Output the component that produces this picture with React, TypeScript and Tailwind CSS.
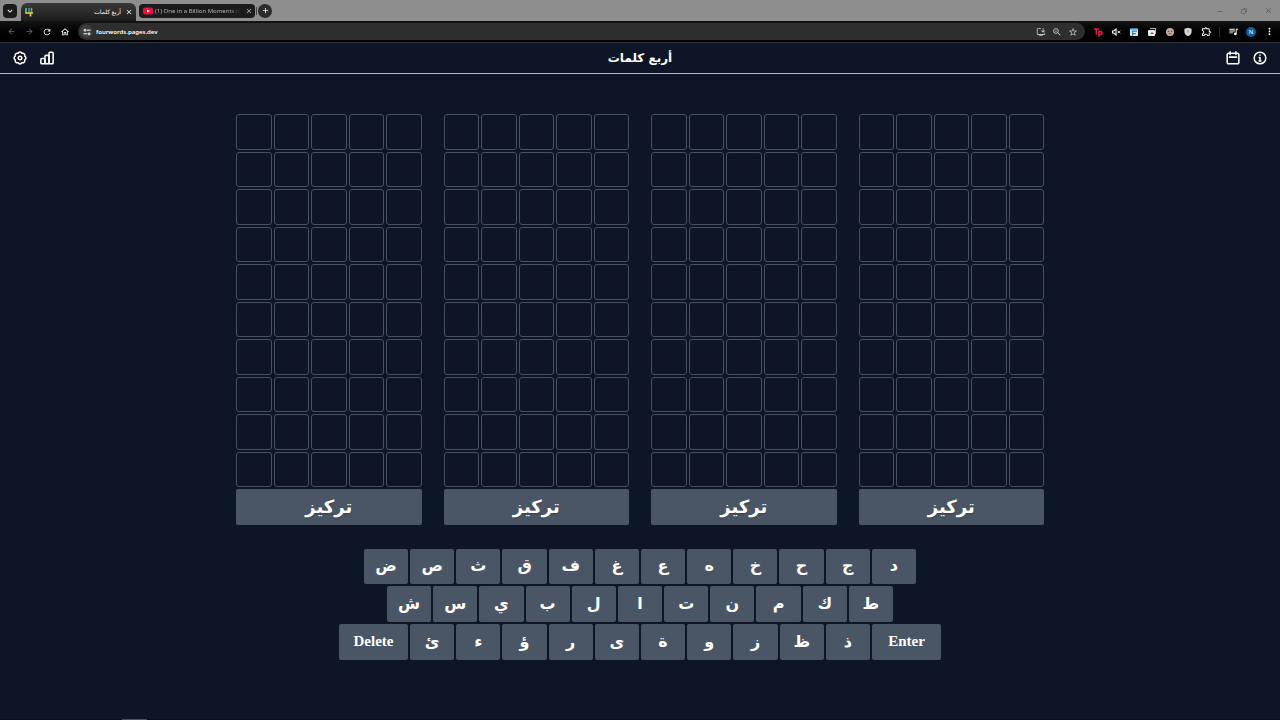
import type { ReactNode } from 'react'
import {
  MdArrowBack, MdArrowForward, MdRefresh, MdOutlineHome, MdInstallDesktop, MdZoomIn,
  MdStarOutline, MdOutlineExtension, MdQueueMusic, MdMoreVert, MdClose, MdAdd,
  MdKeyboardArrowDown,
} from 'react-icons/md'

const firstRow = ['د', 'ج', 'ح', 'خ', 'ه', 'ع', 'غ', 'ف', 'ق', 'ث', 'ص', 'ض']
const secondRow = ['ط', 'ك', 'م', 'ن', 'ت', 'ا', 'ل', 'ب', 'ي', 'س', 'ش']
const thirdRow = ['ذ', 'ظ', 'ز', 'و', 'ة', 'ى', 'ر', 'ؤ', 'ء', 'ئ']

const keyStyle = 'flex items-center justify-center rounded-xs bg-[#4a5666] font-bold text-white'

function IconButton({ label, className = '', children }: { label: string; className?: string; children: ReactNode }) {
  return (
    <button type="button" aria-label={label} className={`flex shrink-0 items-center justify-center ${className}`}>
      {children}
    </button>
  )
}

function LineIcon({ children }: { children: ReactNode }) {
  return (
    <svg
      viewBox="0 0 24 24"
      className="size-full"
      fill="none"
      stroke="currentColor"
      strokeWidth="2.6"
      strokeLinecap="round"
      strokeLinejoin="round"
      aria-hidden="true"
    >
      {children}
    </svg>
  )
}

function TabStrip() {
  return (
    <div className="flex h-[21px] items-center bg-[#8e8e8e] pl-[3px]">
      <IconButton label="Search tabs" className="size-[14px] rounded-sm bg-[#1b1b1b]">
        <MdKeyboardArrowDown size={10} />
      </IconButton>
      <div className="ml-1 flex h-[18px] w-[115px] items-center self-end rounded-t-md bg-linear-to-b from-[#3a3a3a] to-[#1c1c1c] px-[3px]">
        <svg viewBox="0 0 10 10" className="size-2.5 shrink-0" aria-hidden="true">
          <path d="M2 1v5" stroke="#4fb477" strokeWidth="1.800" />
          <path d="M5 1v4" stroke="#4590b5" strokeWidth="1.600" />
          <path d="M1.200 6h7.800" stroke="#dcb83f" strokeWidth="1.800" />
          <path d="M7.500 1v4" stroke="#4fb477" strokeWidth="1.600" />
          <path d="M6.500 5v4.500" stroke="#d8c250" strokeWidth="1.800" />
        </svg>
        <span className="flex-1 text-start text-[6px] leading-none" dir="rtl">أربع كلمات</span>
        <IconButton label="Close tab" className="ml-1 size-2"><MdClose size={8} /></IconButton>
      </div>
      <div className="ml-[3px] flex h-[14px] w-[116px] items-center rounded-sm bg-[#1b1b1b] px-1 text-[#b5b5b5]">
        <svg viewBox="0 0 10 8" className="h-2 w-2.5 shrink-0" aria-hidden="true">
          <rect y="0.5" width="10" height="7" rx="2" fill="#e8113c" />
          <path d="m4 2.5 3 1.5-3 1.5z" fill="#fff" />
        </svg>
        <span className="ml-0.5 flex-1 mask-r-from-85% text-[6px] leading-[10px] whitespace-nowrap">
          (1) One in a Billion Moments in
        </span>
        <IconButton label="Close tab" className="ml-1 size-2"><MdClose size={8} /></IconButton>
      </div>
      <div className="ml-px h-2 w-px bg-[#444]" />
      <IconButton label="New tab" className="ml-px size-[14px] rounded-full bg-[#2b2b2b]"><MdAdd size={9} /></IconButton>
      <div className="ml-auto flex text-[#626262]">
        <IconButton label="Minimize" className="w-6">
          <svg viewBox="0 0 8 8" className="size-2" aria-hidden="true"><path d="M1.5 4.5h5" stroke="currentColor" /></svg>
        </IconButton>
        <IconButton label="Restore" className="w-6">
          <svg viewBox="0 0 8 8" className="size-2" fill="none" stroke="currentColor" strokeWidth="0.8" aria-hidden="true">
            <rect x="1.5" y="2.5" width="4" height="4" rx="0.8" /><path d="M3 1.4h2.5a1 1 0 0 1 1 1V5" />
          </svg>
        </IconButton>
        <IconButton label="Close window" className="w-6"><MdClose size={9} /></IconButton>
      </div>
    </div>
  )
}

function Toolbar() {
  return (
    <div className="flex h-[22px] items-center border-b border-[#30333a] bg-linear-to-b from-[#141414] to-black px-0.5">
      <IconButton label="Back" className="w-[18px] text-[#6b6b6b]"><MdArrowBack size={9} /></IconButton>
      <IconButton label="Forward" className="w-[18px] text-[#6b6b6b]"><MdArrowForward size={9} /></IconButton>
      <IconButton label="Reload" className="w-[18px]"><MdRefresh size={10} /></IconButton>
      <IconButton label="Home" className="w-[18px]"><MdOutlineHome size={10} /></IconButton>
      <div className="mx-1 flex h-[17px] flex-1 items-center rounded-full bg-[#2e2e2e] pr-1 pl-0.5">
        <IconButton label="Site information" className="size-[13px] rounded-full bg-[#3e3e3e]">
          <svg viewBox="0 0 10 10" className="size-2.5" fill="none" stroke="currentColor" strokeWidth="1" aria-hidden="true">
            <circle cx="3" cy="3.200" r="1" /><path d="M5 3.200h3.500" /><circle cx="7" cy="6.800" r="1" /><path d="M1.500 6.800H5" />
          </svg>
        </IconButton>
        <input
          aria-label="Address"
          defaultValue="fourwords.pages.dev"
          className="ml-[3px] min-w-0 flex-1 bg-transparent text-[6px] leading-none font-semibold outline-none"
        />
        <IconButton label="Install app" className="w-4 text-[#c4c4c4]"><MdInstallDesktop size={10} /></IconButton>
        <IconButton label="Zoom" className="w-4 text-[#c4c4c4]"><MdZoomIn size={10} /></IconButton>
        <IconButton label="Bookmark" className="w-4 text-[#c4c4c4]"><MdStarOutline size={10} /></IconButton>
      </div>
      <IconButton label="TP extension" className="w-[18px] text-[#e11d48]">
        <svg viewBox="0 0 10 10" className="size-2.5" fill="none" stroke="currentColor" strokeWidth="1.600" aria-hidden="true">
          <path d="M.8 2h5.400M3.400 2v5.500M6 9.800V4.600h1.600a1.500 1.500 0 0 1 0 3H6" />
        </svg>
      </IconButton>
      <IconButton label="Mute extension" className="w-[18px]">
        <svg viewBox="0 0 10 10" className="size-2.5" aria-hidden="true">
          <path d="M1.5 4v2h1.3L5 8V2L2.8 4z" fill="none" stroke="#eee" strokeWidth="1.1" />
          <path d="m6.5 3.7 2.6 2.6m0-2.6L6.5 6.3" stroke="#eee" />
        </svg>
      </IconButton>
      <IconButton label="Notes extension" className="w-[18px]">
        <svg viewBox="0 0 10 10" className="size-2.5" aria-hidden="true">
          <rect x="1" y="1" width="8" height="8" rx="0.800" fill="#d9ecf7" />
          <path d="M1 1h8v1.500H1z" fill="#2584bd" />
          <path d="M3.500 9V4.200H8M3.500 6.600h3.300" fill="none" stroke="#2584bd" strokeWidth="1.200" />
        </svg>
      </IconButton>
      <IconButton label="Image extension" className="w-[18px]">
        <svg viewBox="0 0 10 10" className="size-2.5" aria-hidden="true">
          <path d="M3 1h6v6H8V2H3z" fill="#bdbdbd" />
          <rect x="1" y="3" width="7" height="6" rx="1" fill="#eee" /><path d="m3 7 2-2 2 2z" fill="#a04545" />
        </svg>
      </IconButton>
      <IconButton label="Cookie extension" className="w-[18px]">
        <svg viewBox="0 0 10 10" className="size-2.5" aria-hidden="true">
          <circle cx="5" cy="5" r="4" fill="#c3ada3" />
          <circle cx="3.5" cy="4.2" r="0.8" fill="#6b4b41" /><circle cx="6.5" cy="4.2" r="0.8" fill="#6b4b41" />
          <path d="M3.4 6.6h3.2" stroke="#7d5a4e" strokeWidth="0.8" />
        </svg>
      </IconButton>
      <IconButton label="Shield extension" className="w-[18px]">
        <svg viewBox="0 0 10 10" className="size-2.5" aria-hidden="true">
          <path d="m5 .8 3.6 1v3C8.600 7 7 8.500 5 9.300 3 8.500 1.400 7 1.400 4.800v-3z" fill="#d5d5d5" />
          <path d="M5 3v3" stroke="#999" />
        </svg>
      </IconButton>
      <IconButton label="Extensions" className="w-[18px]"><MdOutlineExtension size={11} /></IconButton>
      <div className="mx-1 h-2.5 w-px bg-[#2c2c2c]" />
      <IconButton label="Media controls" className="w-[18px]"><MdQueueMusic size={11} /></IconButton>
      <IconButton label="Profile" className="w-[18px]">
        <span className="flex size-[10px] items-center justify-center rounded-full bg-[#0b62a4] text-[6px] leading-none">N</span>
      </IconButton>
      <IconButton label="Menu" className="w-[18px]"><MdMoreVert size={11} /></IconButton>
    </div>
  )
}

function Header() {
  return (
    <header className="flex h-[31px] items-center justify-between border-b border-[#b4bac5] px-[13px] text-white">
      <div className="flex gap-[13px]">
        <IconButton label="الإعدادات" className="size-[14px]">
          <LineIcon>
            <path d="M8.700 4a3.600 3.600 0 0 1 6.600 0 3.600 3.600 0 0 1 4.700 4.700 3.600 3.600 0 0 1 0 6.600 3.600 3.600 0 0 1-4.700 4.700 3.600 3.600 0 0 1-6.600 0A3.600 3.600 0 0 1 4 15.300a3.600 3.600 0 0 1 0-6.600A3.600 3.600 0 0 1 8.700 4Z" />
            <circle cx="12" cy="12" r="3" />
          </LineIcon>
        </IconButton>
        <IconButton label="الإحصائيات" className="size-[14px]">
          <LineIcon>
            <rect x="1.500" y="13" width="7" height="9" rx="1.500" />
            <rect x="8.500" y="7.500" width="7" height="14.500" rx="1.500" />
            <rect x="15.500" y="2" width="7" height="20" rx="1.500" />
          </LineIcon>
        </IconButton>
      </div>
      <h1 className="text-xs leading-5 font-bold" dir="rtl">أربع كلمات</h1>
      <div className="flex gap-[13px]">
        <IconButton label="الأرشيف" className="size-[14px]">
          <LineIcon>
            <rect x="2" y="4" width="20" height="18" rx="2.500" />
            <path d="M7 1.500V6M17 1.500V6M6 10.500h12" />
          </LineIcon>
        </IconButton>
        <IconButton label="معلومات" className="size-[14px]">
          <LineIcon>
            <circle cx="12" cy="12" r="10" />
            <path d="M10.500 11H12v6M10.500 17h3M12 7v.2" />
          </LineIcon>
        </IconButton>
      </div>
    </header>
  )
}

function Board() {
  return (
    <div className="grid flex-1 auto-rows-fr grid-cols-5 gap-0.5">
      {Array.from({ length: 50 }, (_, i) => (
        <div key={i} className="aspect-square rounded-[3px] border border-[#465164]" />
      ))}
      <button type="button" className={`${keyStyle} col-span-5 text-lg leading-none text-shadow-sm`}>
        تركيز
      </button>
    </div>
  )
}

function LetterKeys({ letters }: { letters: string[] }) {
  return letters.map((letter) => (
    <button key={letter} type="button" className={`${keyStyle} min-w-0 flex-1 text-base leading-none`}>
      {letter}
    </button>
  ))
}

function ActionKey({ children }: { children: ReactNode }) {
  return (
    <button type="button" className={`${keyStyle} w-[69px] font-['Liberation_Serif',serif] text-[15px] leading-none`}>
      {children}
    </button>
  )
}

export default function App() {
  return (
    <div className="flex min-h-screen flex-col bg-[#0e1526] font-['DejaVu_Sans',sans-serif]">
      <div className="font-['Noto_Sans','DejaVu_Sans',sans-serif] text-white">
        <TabStrip />
        <Toolbar />
      </div>
      <Header />
      <main className="flex flex-col items-center px-4 pt-10" dir="rtl">
        <div className="flex w-full max-w-[808px] gap-[22px]">
          <Board />
          <Board />
          <Board />
          <Board />
        </div>
        <div className="mt-6 grid h-[111px] w-full grid-rows-3 justify-items-center gap-0.5">
          <div className="flex w-full max-w-[552px] gap-0.5"><LetterKeys letters={firstRow} /></div>
          <div className="flex w-full max-w-[506px] gap-0.5"><LetterKeys letters={secondRow} /></div>
          <div className="flex w-full max-w-[602px] gap-0.5">
            <ActionKey>Enter</ActionKey>
            <LetterKeys letters={thirdRow} />
            <ActionKey>Delete</ActionKey>
          </div>
        </div>
      </main>
      <div className="mt-auto h-px bg-[#0a0f1b] pl-[122px]">
        <div className="h-full w-[25px] bg-[#4d5159]" />
      </div>
    </div>
  )
}
